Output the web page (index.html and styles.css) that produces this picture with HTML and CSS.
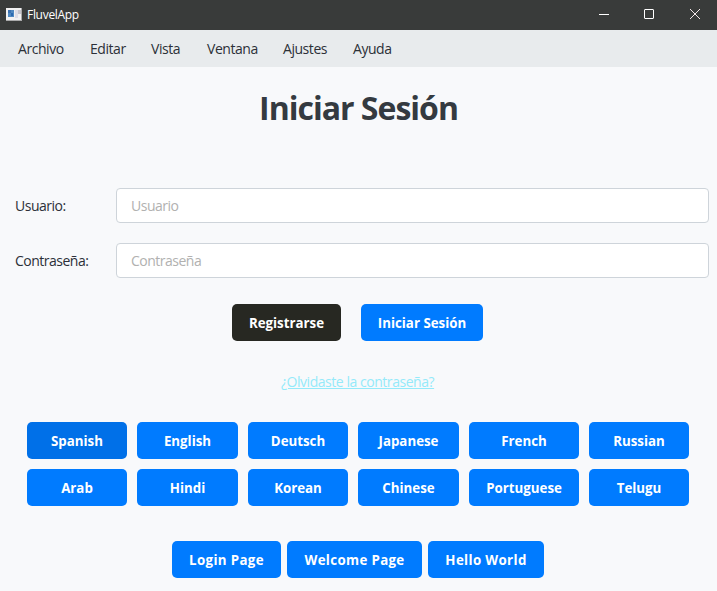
FILE: index.html
```html
<!DOCTYPE html>
<html lang="es">
<head>
<meta charset="utf-8">
<title>FluvelApp</title>
<link rel="stylesheet" href="styles.css">
</head>
<body>
<header class="titlebar">
  <svg class="app-icon" width="16" height="13" viewBox="0 0 16 13" shape-rendering="crispEdges"><rect width="16" height="13" fill="#a9a9aa"/><rect y="0" width="15" height="12" fill="#f1f1f2"/><rect x="2" y="2" width="6" height="7" fill="#4f88c0"/><rect x="2" y="2" width="3" height="3" fill="#3a70b0"/><rect x="5" y="5" width="2" height="3" fill="#2a69b0"/><rect x="9" y="2" width="3" height="8" fill="#dddde7"/><rect x="12" y="2" width="3" height="4" fill="#c4c4cc"/></svg>
  <span class="app-name">FluvelApp</span>
  <div class="controls">
    <svg width="45" height="30" viewBox="0 0 45 30"><path d="M18 14.5h10" stroke="#fff" fill="none"/></svg>
    <svg width="46" height="30" viewBox="0 0 46 30"><rect x="18.5" y="9.5" width="9" height="9" rx=".5" stroke="#fff" fill="none"/></svg>
    <svg width="46" height="30" viewBox="0 0 46 30"><path d="M18 9l10 10M28 9L18 19" stroke="#f3e6e8" fill="none"/></svg>
  </div>
</header>
<nav class="menubar">
  <a class="archivo">Archivo</a><a class="editar">Editar</a><a class="vista">Vista</a><a class="ventana">Ventana</a><a class="ajustes">Ajustes</a><a class="ayuda">Ayuda</a>
</nav>
<main>
  <h1>Iniciar Sesión</h1>
  <form class="fields">
    <label for="user">Usuario:</label><input id="user" type="text" placeholder="Usuario">
    <label for="pass">Contraseña:</label><input id="pass" type="text" placeholder="Contraseña">
  </form>
  <div class="actions">
    <button class="btn dark">Registrarse</button>
    <button class="btn sign-in">Iniciar Sesión</button>
  </div>
  <a class="forgot">¿Olvidaste la contraseña?</a>
  <div class="languages">
    <button class="btn active">Spanish</button><button class="btn">English</button><button class="btn">Deutsch</button><button class="btn">Japanese</button><button class="btn">French</button><button class="btn">Russian</button>
    <button class="btn">Arab</button><button class="btn">Hindi</button><button class="btn">Korean</button><button class="btn">Chinese</button><button class="btn">Portuguese</button><button class="btn">Telugu</button>
  </div>
  <div class="pages">
    <button class="btn">Login Page</button><button class="btn">Welcome Page</button><button class="btn">Hello World</button>
  </div>
</main>
</body>
</html>
```
FILE: styles.css
```css
* { box-sizing: border-box; }
body {
  margin: 0;
  height: 591px;
  overflow: hidden;
  background: #f8f9fb;
  color: #2c3038;
  font-family: "Open Sans", "Noto Sans", sans-serif;
  font-size: 14px;
}
.titlebar {
  display: flex;
  align-items: center;
  height: 30px;
  padding-left: 6px;
  background: #393b3a;
  color: #fff;
}
.app-icon { margin-top: -2px; }
.app-name { margin: -2px 0 0 5px; font-size: 12px; letter-spacing: -.3px; }
.controls { display: flex; margin-left: auto; margin-right: -1px; }
.controls svg { display: block; }
.menubar {
  display: flex;
  gap: 26px;
  height: 37px;
  padding-left: 18px;
  align-items: center;
  background: #e8ebed;
  letter-spacing: -.45px;
}
.archivo { width: 46px; }
.editar { width: 35px; }
.vista { width: 30px; }
.ventana { width: 50px; }
.ajustes { width: 44px; }
.menubar a { white-space: nowrap; }
h1 {
  margin: 15px 0 0;
  height: 51px;
  line-height: 51px;
  text-align: center;
  color: #343a40;
  font-size: 32px;
  font-weight: 700;
  letter-spacing: -1px;
}
.fields {
  display: grid;
  grid-template-columns: 101px 593px;
  row-gap: 20px;
  align-items: center;
  margin: 55px 0 0 15px;
  letter-spacing: -.5px;
}
.fields input {
  width: 593px;
  height: 35px;
  padding: 0 14px;
  border: 1px solid #ced4da;
  border-radius: 4px;
  background: #fff;
  font: inherit;
  letter-spacing: inherit;
}
.fields input::placeholder { color: #b1b1b0; opacity: 1; }
.btn {
  height: 37px;
  padding: 1px 0 0;
  border: 0;
  border-radius: 5px;
  background: #007bff;
  color: #fff;
  font: 700 13.3px "Open Sans", "Noto Sans", sans-serif;
  letter-spacing: 0;
  white-space: nowrap;
}
.actions { display: flex; gap: 20px; margin: 26px 0 0 232px; }
.actions .dark { width: 109px; background: #272822; }
.actions .sign-in { width: 122px; }
.btn.active { background: #0070e8; }
.forgot {
  display: block;
  width: 154px;
  margin: 31px 0 0 281px;
  height: 20px;
  line-height: 20px;
  color: #94eafa;
  letter-spacing: -.46px;
  white-space: nowrap;
  text-decoration: underline;
}
.languages {
  display: grid;
  grid-template-columns: 100px 101px 100px 101px 110px 100px;
  gap: 10px;
  margin: 30px 0 0 27px;
}
.pages {
  display: grid;
  grid-template-columns: 109px 135px 116px;
  gap: 6px;
  margin: 35px 0 0 172px;
}
.pages .btn { letter-spacing: .35px; }
```
